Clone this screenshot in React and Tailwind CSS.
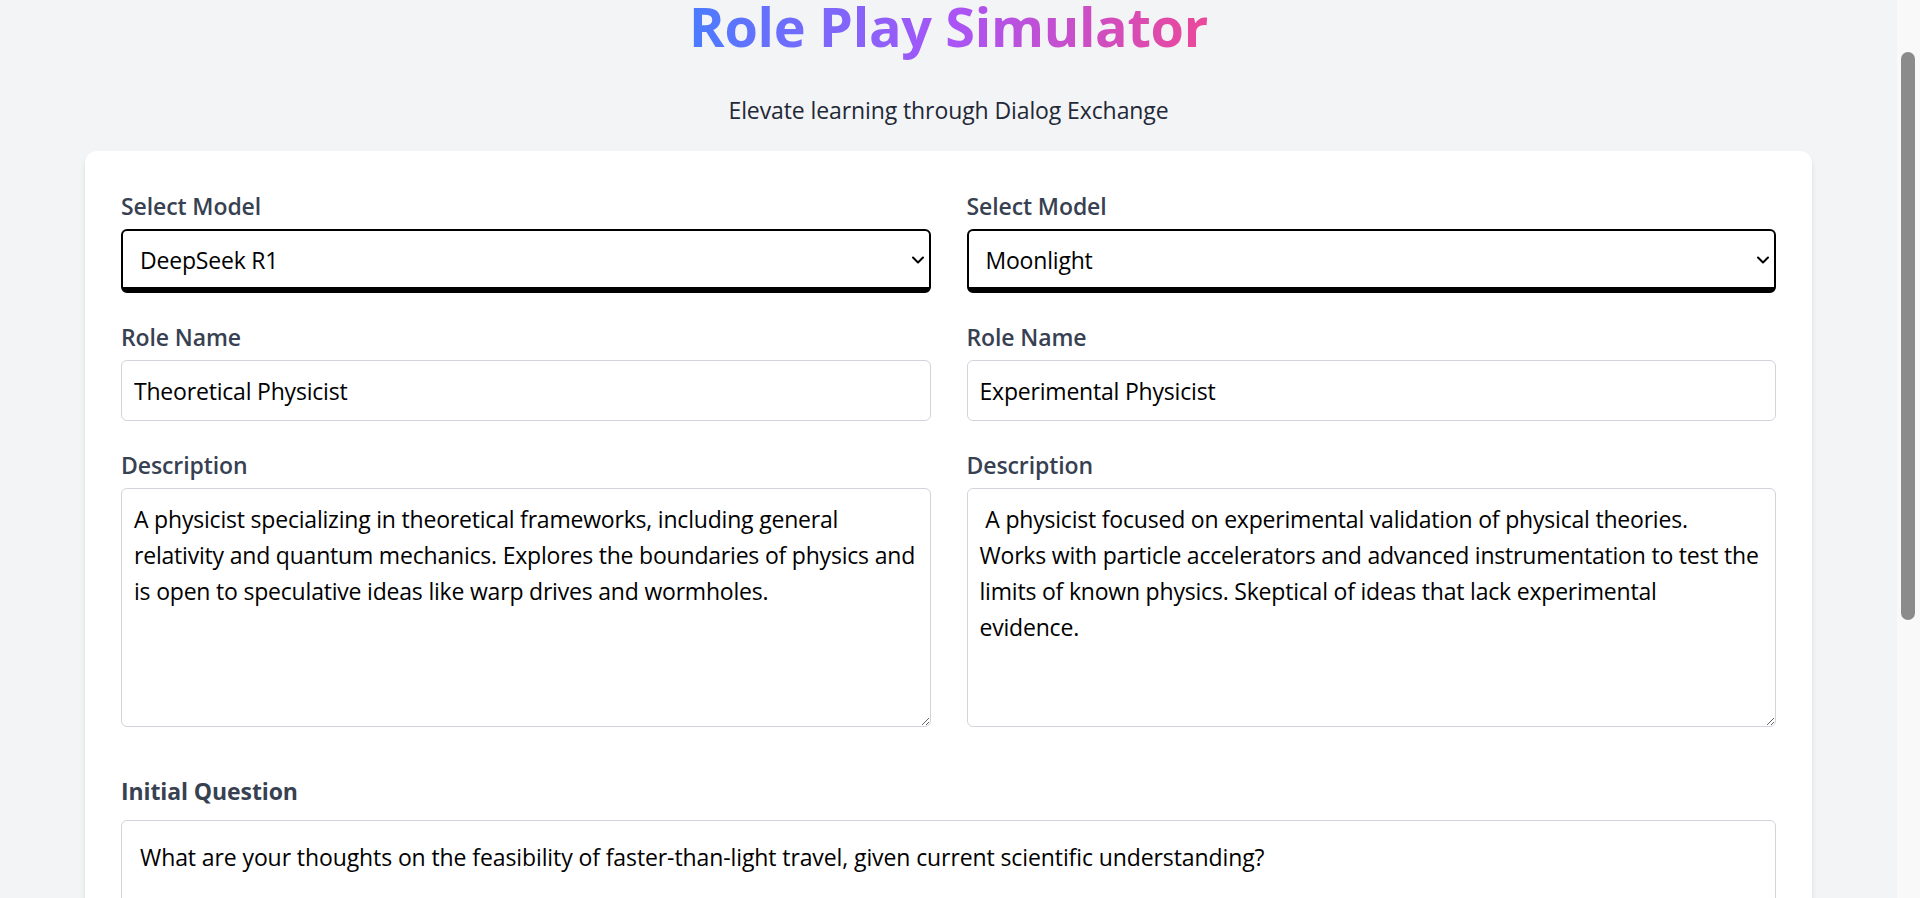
import React from "react";

function Label({ children, bold = false }) {
  return (
    <label
      className={
        bold
          ? "block text-[23px] leading-[38px] font-bold text-[#374151] tracking-[-0.1px]"
          : "block text-[23px] leading-[38px] font-semibold text-[#374151] tracking-[-0.1px]"
      }
    >
      {children}
    </label>
  );
}

function ModelSelect({ value }) {
  const options = ["DeepSeek R1", "Moonlight", "Qwen 2.5", "Llama 3.3"];
  return (
    <div className="relative mt-[4px]">
      <select
        defaultValue={value}
        className="block w-full h-[64px] appearance-none rounded-[6px] border-2 border-b-[6px] border-black bg-white pl-[17px] pr-[30px] pt-[3px] text-[23px] tracking-[-0.2px] text-black outline-none"
      >
        {options.map((o) => (
          <option key={o}>{o}</option>
        ))}
      </select>
      <svg
        className="pointer-events-none absolute right-[7px] top-[27px]"
        width="12"
        height="8"
        viewBox="0 0 12 8"
        fill="none"
      >
        <path
          d="M1 1.5L6 6.5L11 1.5"
          stroke="black"
          strokeWidth="2"
          strokeLinecap="round"
          strokeLinejoin="round"
        />
      </svg>
    </div>
  );
}

function Column({ model, role, description }) {
  return (
    <div className="flex flex-col">
      <Label>Select Model</Label>
      <ModelSelect value={model} />
      <div className="mt-[25px]">
        <Label>Role Name</Label>
      </div>
      <input
        type="text"
        defaultValue={role}
        className="mt-[4px] block w-full h-[61px] rounded-[6px] border-[1.5px] border-[#d1d5db] bg-white px-[12px] text-[23px] tracking-[-0.2px] text-black outline-none"
      />
      <div className="mt-[25px]">
        <Label>Description</Label>
      </div>
      <textarea
        defaultValue={description}
        wrap="off"
        className="mt-[4px] block w-full h-[239px] overflow-hidden rounded-[6px] border-[1.5px] border-[#d1d5db] bg-white p-[12px] text-[23px] leading-[36px] tracking-[-0.2px] text-black outline-none"
      />
    </div>
  );
}

export default function App() {
  return (
    <div className="min-h-screen bg-[#f3f4f6] flex flex-col font-['Open_Sans',sans-serif]">
      <div className="ml-[85px] w-[1727px] flex flex-col pb-[200px]">
        <h1 className="-mt-[11px] text-center text-[54px] leading-[74px] font-bold tracking-[-0.3px]">
          <span className="bg-[linear-gradient(to_right,#4a7cff,#a855f7,#ec4899)] bg-clip-text text-transparent">
            Role Play Simulator
          </span>
        </h1>
        <p className="mt-[29px] text-center text-[23px] leading-[36px] text-[#1f2937] tracking-[-0.1px]">
          Elevate learning through Dialog Exchange
        </p>

        <div className="mt-[23px] rounded-[12px] bg-white shadow-md p-[36px]">
          <div className="grid grid-cols-2 gap-x-[36px]">
            <Column
              model="DeepSeek R1"
              role="Theoretical Physicist"
              description={
                "A physicist specializing in theoretical frameworks, including general\nrelativity and quantum mechanics. Explores the boundaries of physics and\nis open to speculative ideas like warp drives and wormholes."
              }
            />
            <Column
              model="Moonlight"
              role="Experimental Physicist"
              description={
                " A physicist focused on experimental validation of physical theories.\nWorks with particle accelerators and advanced instrumentation to test the\nlimits of known physics. Skeptical of ideas that lack experimental\nevidence."
              }
            />
          </div>

          <div className="mt-[45px]">
            <Label bold>Initial Question</Label>
          </div>
          <textarea
            defaultValue="What are your thoughts on the feasibility of faster-than-light travel, given current scientific understanding?"
            className="mt-[10px] block w-full h-[147px] rounded-[6px] border-[1.5px] border-[#d1d5db] bg-white p-[18px] text-[23px] leading-[36px] tracking-[-0.1px] text-black outline-none"
          />

          <div className="mt-[36px] flex justify-center">
            <button className="h-[60px] rounded-[9px] bg-[#3b82f6] px-[36px] text-[23px] font-semibold text-white">
              Start Conversation
            </button>
          </div>
        </div>
      </div>

      {/* window scrollbar drawn over the page edge */}
      <div className="fixed right-0 top-0 h-screen w-[23px] bg-[#f9f9f9]">
        <div className="ml-[4px] mt-[52px] h-[568px] w-[14px] rounded-full bg-[#8b8b8b]" />
      </div>
    </div>
  );
}
